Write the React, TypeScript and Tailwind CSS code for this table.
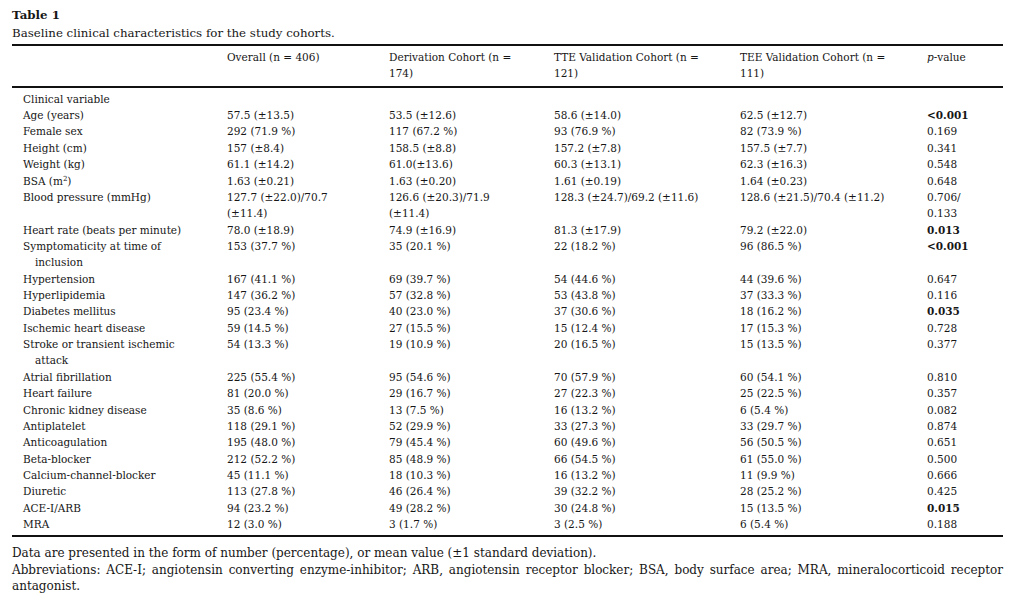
import React from "react";

type Row = {
  label: React.ReactNode;
  cells: React.ReactNode[];
  p: React.ReactNode;
  bold?: boolean;
};

const rows: Row[] = [
  { label: "Age (years)", cells: ["57.5 (±13.5)", "53.5 (±12.6)", "58.6 (±14.0)", "62.5 (±12.7)"], p: "<0.001", bold: true },
  { label: "Female sex", cells: ["292 (71.9 %)", "117 (67.2 %)", "93 (76.9 %)", "82 (73.9 %)"], p: "0.169" },
  { label: "Height (cm)", cells: ["157 (±8.4)", "158.5 (±8.8)", "157.2 (±7.8)", "157.5 (±7.7)"], p: "0.341" },
  { label: "Weight (kg)", cells: ["61.1 (±14.2)", "61.0(±13.6)", "60.3 (±13.1)", "62.3 (±16.3)"], p: "0.548" },
  {
    label: (
      <>
        BSA (m<sup className="text-[7px]">2</sup>)
      </>
    ),
    cells: ["1.63 (±0.21)", "1.63 (±0.20)", "1.61 (±0.19)", "1.64 (±0.23)"],
    p: "0.648",
  },
  {
    label: "Blood pressure (mmHg)",
    cells: [
      <>127.7 (±22.0)/70.7<br />(±11.4)</>,
      <>126.6 (±20.3)/71.9<br />(±11.4)</>,
      "128.3 (±24.7)/69.2 (±11.6)",
      "128.6 (±21.5)/70.4 (±11.2)",
    ],
    p: <>0.706/<br />0.133</>,
  },
  { label: "Heart rate (beats per minute)", cells: ["78.0 (±18.9)", "74.9 (±16.9)", "81.3 (±17.9)", "79.2 (±22.0)"], p: "0.013", bold: true },
  {
    label: <>Symptomaticity at time of<br /><span className="pl-[12px]">inclusion</span></>,
    cells: ["153 (37.7 %)", "35 (20.1 %)", "22 (18.2 %)", "96 (86.5 %)"],
    p: "<0.001",
    bold: true,
  },
  { label: "Hypertension", cells: ["167 (41.1 %)", "69 (39.7 %)", "54 (44.6 %)", "44 (39.6 %)"], p: "0.647" },
  { label: "Hyperlipidemia", cells: ["147 (36.2 %)", "57 (32.8 %)", "53 (43.8 %)", "37 (33.3 %)"], p: "0.116" },
  { label: "Diabetes mellitus", cells: ["95 (23.4 %)", "40 (23.0 %)", "37 (30.6 %)", "18 (16.2 %)"], p: "0.035", bold: true },
  { label: "Ischemic heart disease", cells: ["59 (14.5 %)", "27 (15.5 %)", "15 (12.4 %)", "17 (15.3 %)"], p: "0.728" },
  {
    label: <>Stroke or transient ischemic<br /><span className="pl-[12px]">attack</span></>,
    cells: ["54 (13.3 %)", "19 (10.9 %)", "20 (16.5 %)", "15 (13.5 %)"],
    p: "0.377",
  },
  { label: "Atrial fibrillation", cells: ["225 (55.4 %)", "95 (54.6 %)", "70 (57.9 %)", "60 (54.1 %)"], p: "0.810" },
  { label: "Heart failure", cells: ["81 (20.0 %)", "29 (16.7 %)", "27 (22.3 %)", "25 (22.5 %)"], p: "0.357" },
  { label: "Chronic kidney disease", cells: ["35 (8.6 %)", "13 (7.5 %)", "16 (13.2 %)", "6 (5.4 %)"], p: "0.082" },
  { label: "Antiplatelet", cells: ["118 (29.1 %)", "52 (29.9 %)", "33 (27.3 %)", "33 (29.7 %)"], p: "0.874" },
  { label: "Anticoagulation", cells: ["195 (48.0 %)", "79 (45.4 %)", "60 (49.6 %)", "56 (50.5 %)"], p: "0.651" },
  { label: "Beta-blocker", cells: ["212 (52.2 %)", "85 (48.9 %)", "66 (54.5 %)", "61 (55.0 %)"], p: "0.500" },
  { label: "Calcium-channel-blocker", cells: ["45 (11.1 %)", "18 (10.3 %)", "16 (13.2 %)", "11 (9.9 %)"], p: "0.666" },
  { label: "Diuretic", cells: ["113 (27.8 %)", "46 (26.4 %)", "39 (32.2 %)", "28 (25.2 %)"], p: "0.425" },
  { label: "ACE-I/ARB", cells: ["94 (23.2 %)", "49 (28.2 %)", "30 (24.8 %)", "15 (13.5 %)"], p: "0.015", bold: true },
  { label: "MRA", cells: ["12 (3.0 %)", "3 (1.7 %)", "3 (2.5 %)", "6 (5.4 %)"], p: "0.188" },
];

const App: React.FC = () => {
  return (
    <div className="w-[1024px] h-[604px] bg-white text-[#161616] pl-[12px] pr-[21px] pt-[5px] font-['DejaVu_Serif',serif] text-[10.5px]">
      <div className="text-[11.8px] leading-[19px]">
        <div className="font-bold pt-[1px] leading-[18px]">Table 1</div>
        <div>Baseline clinical characteristics for the study cohorts.</div>
      </div>

      <table className="mt-[1px] w-[991px] table-fixed border-collapse leading-[16.36px]">
        <colgroup>
          <col className="w-[215px]" />
          <col className="w-[162px]" />
          <col className="w-[165px]" />
          <col className="w-[186px]" />
          <col className="w-[187px]" />
          <col className="w-[76px]" />
        </colgroup>
        <thead>
          <tr className="border-t-2 border-b-2 border-[#111] align-top">
            <th className="pt-[3px] pb-[4px]" />
            <th className="pt-[3px] pb-[4px] text-left font-normal">Overall (n = 406)</th>
            <th className="pt-[3px] pb-[4px] text-left font-normal">Derivation Cohort (n =<br />174)</th>
            <th className="pt-[3px] pb-[4px] text-left font-normal">TTE Validation Cohort (n =<br />121)</th>
            <th className="pt-[3px] pb-[4px] text-left font-normal">TEE Validation Cohort (n =<br />111)</th>
            <th className="pt-[3px] pb-[4px] text-left font-normal">
              <i>p</i>-value
            </th>
          </tr>
        </thead>
        <tbody className="border-b-2 border-[#111]">
          <tr>
            <td className="pl-[11px] pt-[3px]" colSpan={6}>Clinical variable</td>
          </tr>
          {rows.map((row, i) => (
            <tr key={i} className="align-top">
              <td className={`pl-[11px] whitespace-nowrap ${i === rows.length - 1 ? "pb-[3px]" : ""}`}>{row.label}</td>
              {row.cells.map((c, j) => (
                <td key={j} className="whitespace-nowrap">{c}</td>
              ))}
              <td className={row.bold ? "font-bold" : ""}>{row.p}</td>
            </tr>
          ))}
        </tbody>
      </table>

      <div className="mt-[8px] w-[991px] text-[12px] leading-[16.4px]">
        <p>Data are presented in the form of number (percentage), or mean value (±1 standard deviation).</p>
        <p className="text-justify">
          Abbreviations: ACE-I; angiotensin converting enzyme-inhibitor; ARB, angiotensin receptor blocker; BSA, body
          surface area; MRA, mineralocorticoid receptor antagonist.
        </p>
      </div>
    </div>
  );
};

export default App;
